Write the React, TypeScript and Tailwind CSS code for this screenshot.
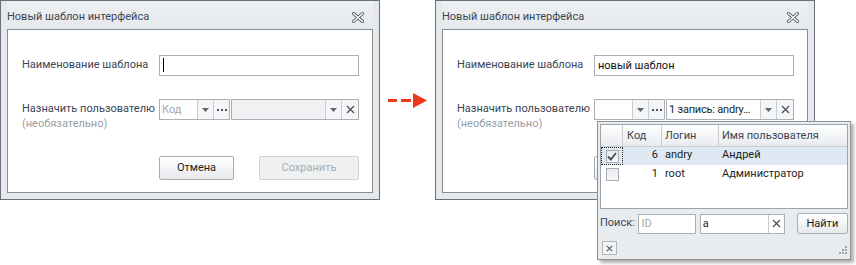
import { memo } from "react";

const font = { fontFamily: 'Roboto, "Noto Sans", sans-serif' };

function CloseGlyph() {
  return (
    <svg width="12" height="11" viewBox="0 0 12 11">
      <path d="M1.5 1.5 L10.5 9.5 M10.5 1.5 L1.5 9.5" stroke="#5b6168" strokeWidth="3.2" strokeLinecap="square" />
      <path d="M1.5 1.5 L10.5 9.5 M10.5 1.5 L1.5 9.5" stroke="#ffffff" strokeWidth="1.3" strokeLinecap="square" />
    </svg>
  );
}

function DropArrow() {
  return (
    <svg width="7" height="4" viewBox="0 0 7 4">
      <path d="M0 0 H7 L3.5 4 Z" fill="#5f6670" />
    </svg>
  );
}

function XGlyph({ size = 9 }: { size?: number }) {
  return (
    <svg width={size} height={size} viewBox="0 0 9 9">
      <path d="M1 1 L8 8 M8 1 L1 8" stroke="#4a515a" strokeWidth="1.3" />
    </svg>
  );
}

function Dots() {
  return (
    <div className="flex gap-[2px]">
      <span className="w-[2px] h-[2px] bg-[#4a515a]" />
      <span className="w-[2px] h-[2px] bg-[#4a515a]" />
      <span className="w-[2px] h-[2px] bg-[#4a515a]" />
    </div>
  );
}

function Check({ checked }: { checked?: boolean }) {
  return (
    <div className="w-[13px] h-[13px] border border-[#a8adb3] bg-gradient-to-b from-[#e9ebee] to-[#f7f8f9] flex items-center justify-center">
      {checked && (
        <svg width="10" height="9" viewBox="0 0 10 9">
          <path d="M1 4.5 L3.8 7.5 L9 1" stroke="#4d535b" strokeWidth="2" fill="none" />
        </svg>
      )}
    </div>
  );
}

function UserCombos({ filled }: { filled?: boolean }) {
  return (
    <div className="flex gap-[1px]">
      <div className="flex h-[21px] w-[71px] border border-[#abb0b6] bg-white">
        <div className="flex-1 pl-[2px] leading-[19px] text-[#a3a7ac]">{filled ? "" : "Код"}</div>
        <div className="w-[16px] border-l border-[#c9cdd1] bg-[#f4f5f6] flex items-center justify-center">
          <DropArrow />
        </div>
        <div className="w-[16px] border-l border-[#c9cdd1] bg-[#f4f5f6] flex items-center justify-center">
          <Dots />
        </div>
      </div>
      <div className={`flex h-[21px] w-[128px] border border-[#abb0b6] ${filled ? "bg-white" : "bg-[#f0f1f2]"}`}>
        <div className="flex-1 min-w-0 pl-[2px] leading-[19px] text-[#1b1e22] whitespace-nowrap overflow-hidden tracking-[-0.2px]">
          {filled ? "1 запись: andry…" : ""}
        </div>
        <div className="w-[16px] border-l border-[#c9cdd1] bg-[#f4f5f6] flex items-center justify-center">
          <DropArrow />
        </div>
        <div className="w-[17px] border-l border-[#c9cdd1] bg-[#f4f5f6] flex items-center justify-center">
          <XGlyph />
        </div>
      </div>
    </div>
  );
}

function Popup() {
  return (
    <div className="absolute left-[161px] top-[120px] w-[254px] h-[139px] border border-[#8d9298] bg-[#e9ecef] shadow-[3px_3px_3px_rgba(0,0,0,0.3)] flex flex-col px-[2px] pt-[2px]">
      <div className="h-[85px] border border-[#9ea3a9] bg-white flex flex-col">
        <div className="flex h-[22px] border-b border-[#c9cdd2] bg-gradient-to-b from-[#ffffff] to-[#e8ebee] text-[#3a4554]">
          <div className="w-[22px] border-r border-[#c9cdd2]" />
          <div className="w-[39px] border-r border-[#c9cdd2] pl-[4px] leading-[21px]">Код</div>
          <div className="w-[57px] border-r border-[#c9cdd2] pl-[3px] leading-[21px]">Логин</div>
          <div className="flex-1 pl-[3px] leading-[21px] whitespace-nowrap">Имя пользователя</div>
        </div>
        <div className="flex h-[18px] bg-[#dfe9f4] text-[#1b1e22] leading-[16px]">
          <div className="w-[22px] border border-dotted border-[#222] flex items-center justify-center">
            <Check checked />
          </div>
          <div className="w-[39px] text-right pr-[4px]">6</div>
          <div className="w-[57px] pl-[3px]">andry</div>
          <div className="flex-1 pl-[3px]">Андрей</div>
        </div>
        <div className="flex h-[18px] text-[#1b1e22] leading-[18px]">
          <div className="w-[22px] flex items-center justify-center">
            <Check />
          </div>
          <div className="w-[39px] text-right pr-[4px]">1</div>
          <div className="w-[57px] pl-[3px]">root</div>
          <div className="flex-1 pl-[3px]">Администратор</div>
        </div>
      </div>
      <div className="flex items-center mt-[4px] h-[21px]">
        <span className="text-[#3a4554] w-[39px] whitespace-nowrap">Поиск:</span>
        <div className="w-[58px] h-[20px] border border-[#abb0b6] bg-white pl-[2px] leading-[18px] text-[#a3a7ac]">ID</div>
        <div className="ml-[4px] flex w-[86px] h-[20px] border border-[#abb0b6] bg-white">
          <div className="flex-1 pl-[2px] leading-[18px] text-[#1b1e22]">a</div>
          <div className="w-[16px] border-l border-[#c9cdd1] flex items-center justify-center">
            <XGlyph />
          </div>
        </div>
        <div className="ml-[12px] w-[52px] h-[21px] border border-[#a9aeb4] rounded-[2px] bg-gradient-to-b from-[#ffffff] to-[#e6e9ec] text-center leading-[19px] text-[#1b1e22]">
          Найти
        </div>
      </div>
      <div className="flex items-end justify-between mt-[7px]">
        <div className="w-[15px] h-[14px] ml-[2px] border border-[#b2b7bc] bg-[#f3f4f5] flex items-center justify-center">
          <XGlyph size={7} />
        </div>
        <svg width="8" height="8" viewBox="0 0 8 8" className="mb-[1px] mr-[1px]">
          <rect x="6" y="0" width="2" height="2" fill="#a0a5ab" />
          <rect x="3" y="3" width="2" height="2" fill="#a0a5ab" />
          <rect x="6" y="3" width="2" height="2" fill="#a0a5ab" />
          <rect x="0" y="6" width="2" height="2" fill="#a0a5ab" />
          <rect x="3" y="6" width="2" height="2" fill="#a0a5ab" />
          <rect x="6" y="6" width="2" height="2" fill="#a0a5ab" />
        </svg>
      </div>
    </div>
  );
}

function Dialog({ filled }: { filled?: boolean }) {
  return (
    <div className="relative w-[380px] h-[200px] border border-[#6a7077] bg-[#e6e9ec] flex flex-col px-[6px] pb-[6px]">
      <div className="h-[28px] flex items-center justify-between pl-[0px] pr-[9px] pt-[5px] bg-gradient-to-b from-[#eef0f2] to-[#e6e9ec]">
        <span className="text-[#3a4554] whitespace-nowrap">Новый шаблон интерфейса</span>
        <CloseGlyph />
      </div>
      <div className="flex-1 border border-[#878c92] bg-white pl-[14px] pt-[25px]">
        <div className="flex items-center h-[21px]">
          <span className="w-[137px] text-[#3a4554] whitespace-nowrap">Наименование шаблона</span>
          <div className="w-[200px] h-[21px] border border-[#abb0b6] bg-white pl-[3px] leading-[19px] text-[#111]">
            {filled ? "новый шаблон" : <span className="inline-block w-[1px] h-[14px] bg-black align-middle mt-[-2px]" />}
          </div>
        </div>
        <div className="flex mt-[23px]">
          <div className="w-[137px] leading-[15px] pt-[2px] whitespace-nowrap">
            <div className="text-[#3a4554]">Назначить пользователю</div>
            <div className="text-[#9aa0a6]">(необязательно)</div>
          </div>
          <UserCombos filled={filled} />
        </div>
        <div className="flex mt-[25px] ml-[137px]">
          <div className="w-[75px] h-[24px] border border-[#a9aeb4] rounded-[2px] bg-gradient-to-b from-[#ffffff] to-[#e6e9ec] text-center leading-[22px] text-[#1b1e22]">
            Отмена
          </div>
          <div className="ml-[25px] w-[100px] h-[24px] border border-[#cfd3d7] rounded-[2px] bg-[#eef0f2] text-center leading-[22px] text-[#a7acb1]">
            Сохранить
          </div>
        </div>
      </div>
      {filled && <Popup />}
    </div>
  );
}

function App() {
  return (
    <div className="w-[856px] h-[265px] bg-white flex items-start text-[11px]" style={font}>
      <Dialog />
      <div className="w-[55px] h-[200px] flex items-center">
        <svg width="55" height="20" viewBox="0 0 55 20" className="mt-[1px]">
          <rect x="8" y="8" width="9" height="3" fill="#f0361a" />
          <rect x="21" y="8" width="10" height="3" fill="#f0361a" />
          <path d="M33 2 L47 9.5 L33 17 Z" fill="#f0361a" />
        </svg>
      </div>
      <Dialog filled />
    </div>
  );
}

export default memo(App);
